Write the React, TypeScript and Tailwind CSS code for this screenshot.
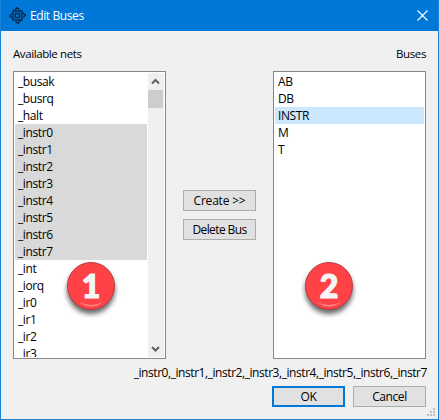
import React from 'react';

const nets = [
  '_busak', '_busrq', '_halt', '_instr0', '_instr1', '_instr2', '_instr3', '_instr4', '_instr5',
  '_instr6', '_instr7', '_int', '_iorq', '_ir0', '_ir1', '_ir2', '_ir3',
];
const buses = ['AB', 'DB', 'INSTR', 'M', 'T'];

function ChipIcon() {
  return (
    <svg width="17" height="17" viewBox="0 0 17 17" fill="none" stroke="#082648" className="shrink-0">
      <rect x="4" y="4" width="9" height="9" strokeWidth="1.400" />
      <rect x="6.500" y="6.500" width="4" height="4" strokeWidth="1.400" />
      <path d="M5.500 3.500L7.500 1.500V.5L10 2v1.500M11.500 13.500L9.500 15.500v1L7 15v-1.500M3.500 11.500L1.500 9.500H.5L2 7h1.500M13.500 5.500L15.500 7.500h1L15 10h-1.500" strokeWidth="1.200" />
    </svg>
  );
}

function Badge({ label }: { label: string }) {
  return (
    <div className="relative flex h-12 w-12 items-center justify-center rounded-full border border-[#b93b44] bg-[#fe4246] shadow-[0_4px_5px_rgba(0,0,0,0.6)]">
      <span className="font-[Lato,sans-serif] text-[32px] leading-[46px] font-black tracking-normal text-[#f6f6f6] [-webkit-text-stroke:1.2px_#f6f6f6]">{label}</span>
      <svg className="absolute bottom-[1px] left-[10px]" width="26" height="7" viewBox="0 0 26 7">
        <path d="M1 1Q13 7 25 1Q13 10 1 1Z" fill="#ff8585" />
      </svg>
    </div>
  );
}

function Button({ children, primary = false }: { children: React.ReactNode; primary?: boolean }) {
  return (
    <button className={`flex h-[21px] w-[73px] items-center justify-center bg-[#e1e1e1] text-[12px] leading-none tracking-[-0.4px] whitespace-nowrap ${primary ? 'border-2 border-[#0078d7]' : 'border border-[#adadad]'}`}>
      {children}
    </button>
  );
}

export default function App() {
  return (
    <div className="relative flex h-[420px] w-[439px] flex-col overflow-hidden border-x border-b border-[#1883d7] bg-[#f0f0f0] font-['Open_Sans','Noto_Sans',sans-serif] text-[12px] tracking-[-0.4px] text-black">
      <header className="flex h-[31px] shrink-0 items-center bg-[#0078d7] pl-2 text-white">
        <ChipIcon />
        <span className="ml-1 text-[12px] leading-4 tracking-[-0.4px]">Edit Buses</span>
        <svg className="mr-[10px] ml-auto" width="11" height="11" viewBox="0 0 11 11" stroke="white" strokeWidth="1.100" fill="none">
          <path d="M.5 .5l10 10M10.500 .5l-10 10" />
        </svg>
      </header>

      <div className="flex h-10 shrink-0 items-center justify-between pt-[6px] pr-3 pl-3 text-[11.5px] tracking-[-0.4px]">
        <span>Available nets</span>
        <span>Buses</span>
      </div>

      <main className="flex h-[288px] shrink-0 justify-between px-3">
        <div className="flex w-[153px] overflow-hidden border border-[#828790] bg-white p-px">
          <ul className="h-[284px] w-[133px] shrink-0 overflow-hidden">
            {nets.map((n) => (
              <li key={n} className={`h-[17px] w-[132px] pl-[3px] leading-[18px] ${n.startsWith('_instr') ? 'bg-[#d9d9d9]' : ''}`}>{n}</li>
            ))}
          </ul>
          <div className="flex h-[284px] w-[16px] flex-col bg-[#f0f0f0]">
            <svg width="16" height="17" viewBox="0 0 16 17" fill="none" stroke="#606060" strokeWidth="2"><path d="M4 10.500L7.500 7 11 10.500" /></svg>
            <div className="h-[18px] w-[15px] bg-[#cdcdcd]" />
            <svg className="mt-auto" width="16" height="17" viewBox="0 0 16 17" fill="none" stroke="#606060" strokeWidth="2"><path d="M4 7L7.500 10.500 11 7" /></svg>
          </div>
        </div>
        <div className="flex flex-col gap-2 pt-[119px]">
          <Button><span className="tracking-[-0.2px]">Create &gt;&gt;</span></Button>
          <Button><span className="tracking-[-0.6px]">Delete Bus</span></Button>
        </div>
        <ul className="w-[153px] border border-[#828790] bg-white p-px">
          {buses.map((b) => (
            <li key={b} className={`h-[17px] pl-[3px] leading-[18px] ${b === 'INSTR' ? 'bg-[#cce8ff]' : ''}`}>{b}</li>
          ))}
        </ul>
      </main>

      <p className="mt-[6px] shrink-0 pr-[11px] text-right leading-4 tracking-[-0.44px]">{nets.slice(3, 11).join(',')}</p>
      <footer className="mt-[5px] flex justify-end gap-2 pr-3">
        <Button primary>OK</Button>
        <Button>Cancel</Button>
      </footer>

      <div className="absolute top-[262px] left-[66px]"><Badge label="1" /></div>
      <div className="absolute top-[262px] left-[304px]"><Badge label="2" /></div>
      <svg className="absolute right-[3px] bottom-[3px]" width="8" height="8" viewBox="0 0 8 8" fill="#bfbfbf">
        <path d="M6 0h2v2H6zM3 3h2v2H3zM6 3h2v2H6zM0 6h2v2H0zM3 6h2v2H3zM6 6h2v2H6z" />
      </svg>
    </div>
  );
}
